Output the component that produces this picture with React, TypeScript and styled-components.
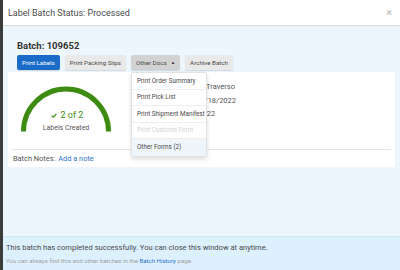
import React from 'react';
import styled, { createGlobalStyle } from 'styled-components';

const COLORS = {
	backdrop: '#3b3d3b',
	text: '#444444',
	muted: '#9a9a9a',
	border: '#dcdcdc',
	bodyBg: '#eef6fd',
	footerBg: '#dcf0fd',
	blue: '#1a6cc8',
	link: '#2f72c9',
	green: '#3d8b10',
	btnGray: '#e9e9e9',
	btnActive: '#d2d2d2'
};

const GlobalStyle = createGlobalStyle`
	*, *::before, *::after {
		box-sizing: border-box;
	}
	html, body {
		margin: 0;
		padding: 0;
		background: ${COLORS.backdrop};
		font-family: Roboto, 'Liberation Sans', sans-serif;
		color: ${COLORS.text};
	}
`;

const Modal = styled.div`
	margin-left: 3px;
	width: 397px;
	height: 270px;
	display: flex;
	flex-direction: column;
	background: #fff;
	overflow: hidden;
`;

const Header = styled.div`
	height: 26px;
	flex: none;
	display: flex;
	align-items: center;
	justify-content: space-between;
	padding: 0 5px;
	border-bottom: 1px solid ${COLORS.border};
	background: #fff;
`;

const Title = styled.div`
	font-size: 9px;
	color: #4a4a4a;
`;

const Close = styled.div`
	font-size: 11px;
	color: #b5b5b5;
	margin-right: 3px;
`;

const Body = styled.div`
	flex: 1;
	background: ${COLORS.bodyBg};
	padding: 14px 5px 0 5px;
`;

const Top = styled.div`
	padding-left: 9px;
`;

const BatchTitle = styled.div`
	font-size: 9.5px;
	font-weight: 700;
	color: #333;
	line-height: 12px;
	margin-bottom: 3px;
`;

const ButtonRow = styled.div`
	display: flex;
	gap: 5px;
`;

const Button = styled.div<{ variant?: 'primary' | 'active' }>`
	position: relative;
	height: 15px;
	padding: 0 5px;
	display: flex;
	align-items: center;
	gap: 4px;
	font-size: 6.2px;
	border-radius: 2px;
	background: ${({ variant }) =>
		variant === 'primary' ? COLORS.blue : variant === 'active' ? COLORS.btnActive : COLORS.btnGray};
	color: ${({ variant }) => (variant === 'primary' ? '#fff' : '#4a4a4a')};
	box-shadow: 0 1px 1px rgba(0, 0, 0, 0.12);
`;

const Caret = styled.span`
	font-size: 4.5px;
	color: #333;
`;

const Menu = styled.div`
	position: absolute;
	top: 17px;
	left: 0;
	width: 76px;
	background: #fff;
	border: 1px solid #e2e2e2;
	border-radius: 2px;
	box-shadow: 0 2px 4px rgba(0, 0, 0, 0.15);
	z-index: 5;
`;

const MenuItem = styled.div<{ disabled?: boolean; highlighted?: boolean }>`
	height: 16.5px;
	display: flex;
	align-items: center;
	padding: 0 5px;
	font-size: 6.3px;
	white-space: nowrap;
	color: ${({ disabled }) => (disabled ? '#d2d2d2' : '#4a4a4a')};
	background: ${({ highlighted }) => (highlighted ? '#eef6fc' : '#fff')};
	border-bottom: 1px solid #eeeeee;
	&:last-child {
		border-bottom: none;
	}
`;

const Card = styled.div`
	margin-top: 2px;
	height: 95px;
	background: #fff;
	padding: 0 4px;
	display: flex;
	flex-direction: column;
`;

const CardTop = styled.div`
	height: 78px;
	flex: none;
	display: flex;
	border-bottom: 1px solid #e4e4e4;
`;

const Gauge = styled.div`
	margin: 14px 0 0 9px;
	width: 90px;
	height: 46px;
	display: grid;
`;

const GaugeArc = styled.svg`
	grid-area: 1 / 1;
`;

const GaugeLabel = styled.div`
	grid-area: 1 / 1;
	align-self: end;
	display: flex;
	flex-direction: column;
	align-items: center;
	margin-bottom: -3px;
`;

const GaugeCount = styled.div`
	font-size: 9px;
	color: ${COLORS.green};
	line-height: 13px;
	display: flex;
	align-items: center;
	gap: 4px;
	margin-left: 2px;
`;

const GaugeCaption = styled.div`
	font-size: 7px;
	color: #555;
	line-height: 13px;
`;

const Details = styled.div`
	margin: 8px 0 0 66px;
	display: flex;
	flex-direction: column;
`;

const DetailLine = styled.div`
	font-size: 7.5px;
	line-height: 13.5px;
	color: #555;
	white-space: nowrap;
`;

const Notes = styled.div`
	flex: 1;
	display: flex;
	align-items: center;
	gap: 3px;
	padding-left: 1px;
	font-size: 7.4px;
	color: #555;
`;

const Link = styled.span`
	color: ${COLORS.link};
`;

const Footer = styled.div`
	height: 34px;
	flex: none;
	background: ${COLORS.footerBg};
	border-top: 1px solid #d3e6f2;
	padding: 5px 3px 0;
	display: flex;
	flex-direction: column;
	gap: 3px;
`;

const FooterMain = styled.div`
	font-size: 7.55px;
	color: #4a4a4a;
	line-height: 11px;
`;

const FooterSub = styled.div`
	font-size: 6.1px;
	color: #a0a0a0;
	line-height: 10px;
`;

const menuItems = [
	{ label: 'Print Order Summary' },
	{ label: 'Print Pick List' },
	{ label: 'Print Shipment Manifest' },
	{ label: 'Print Customs Form', disabled: true },
	{ label: 'Other Forms (2)', highlighted: true }
];

export default function App() {
	return (
		<>
			<GlobalStyle />
			<Modal>
				<Header>
					<Title>Label Batch Status: Processed</Title>
					<Close>×</Close>
				</Header>
				<Body>
					<Top>
						<BatchTitle>Batch: 109652</BatchTitle>
						<ButtonRow>
							<Button variant="primary">Print Labels</Button>
							<Button>Print Packing Slips</Button>
							<Button variant="active">
								Other Docs <Caret>▲</Caret>
								<Menu>
									{menuItems.map((item) => (
										<MenuItem key={item.label} disabled={item.disabled} highlighted={item.highlighted}>
											{item.label}
										</MenuItem>
									))}
								</Menu>
							</Button>
							<Button>Archive Batch</Button>
						</ButtonRow>
					</Top>
					<Card>
						<CardTop>
							<Gauge>
								<GaugeArc width="90" height="46" viewBox="0 0 90 46">
									<path
										d="M 2.5 45.5 A 42.5 42.5 0 0 1 87.5 45.5"
										fill="none"
										stroke={COLORS.green}
										strokeWidth="5"
									/>
								</GaugeArc>
								<GaugeLabel>
									<GaugeCount>
										<svg width="6" height="5" viewBox="0 0 6 5">
											<path d="M0.6 2.6 L2.3 4.2 L5.4 0.8" fill="none" stroke={COLORS.green} strokeWidth="1.2" />
										</svg>
										2 of 2
									</GaugeCount>
									<GaugeCaption>Labels Created</GaugeCaption>
								</GaugeLabel>
							</Gauge>
							<Details>
								<DetailLine>User: Jo Traverso</DetailLine>
								<DetailLine>Date: 01/18/2022</DetailLine>
								<DetailLine>Ship: 01/22</DetailLine>
							</Details>
						</CardTop>
						<Notes>
							Batch Notes: <Link>Add a note</Link>
						</Notes>
					</Card>
				</Body>
				<Footer>
					<FooterMain>This batch has completed successfully. You can close this window at anytime.</FooterMain>
					<FooterSub>
						You can always find this and other batches in the <Link>Batch History</Link> page.
					</FooterSub>
				</Footer>
			</Modal>
		</>
	);
}
